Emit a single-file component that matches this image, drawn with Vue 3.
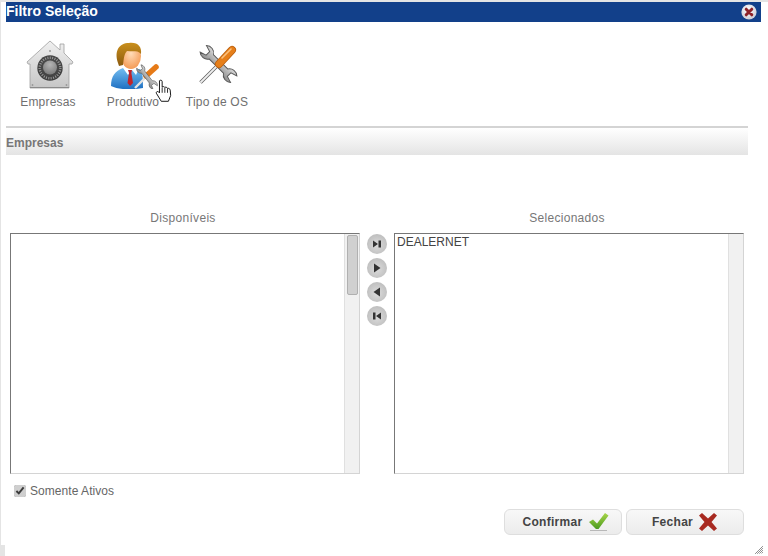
<template>
  <div class="page">
    <div class="corner"></div>
    <div class="titlebar">
      <span class="title">Filtro Seleção</span>
      <svg class="close" width="16" height="16" viewBox="0 0 16 16">
        <defs>
          <radialGradient id="cg" cx="0.45" cy="0.35" r="0.7"><stop offset="0" stop-color="#ffffff"/><stop offset="1" stop-color="#c9c9d2"/></radialGradient>
        </defs>
        <circle cx="8" cy="8" r="7.6" fill="url(#cg)"/>
        <path d="M5.2 5.2 L10.8 10.8 M10.8 5.2 L5.2 10.8" stroke="#8e2228" stroke-width="3" stroke-linecap="round"/>
      </svg>
    </div>

    <div class="toolbar">
      <div class="tool t1">
        <svg width="56" height="50" viewBox="0 0 56 50">
          <defs>
            <linearGradient id="house" x1="0" y1="0" x2="0" y2="1"><stop offset="0" stop-color="#f0f0f0"/><stop offset="1" stop-color="#c6c6c6"/></linearGradient>
            <radialGradient id="dial" cx="0.5" cy="0.4" r="0.6"><stop offset="0" stop-color="#555"/><stop offset="1" stop-color="#3c3c3c"/></radialGradient>
            <radialGradient id="knob" cx="0.5" cy="0.3" r="0.7"><stop offset="0" stop-color="#b5b5b5"/><stop offset="1" stop-color="#7c7c7c"/></radialGradient>
          </defs>
          <path d="M30 2 L40 11 L40 5 L44 5 L44 14 L53 23 L52 25 L49 25 L49 49 L10 49 L10 25 L8 25 L7 23 Z" fill="url(#house)" stroke="#a0a0a0" stroke-width="0.8"/>
          <path d="M10 48 H49 V49 H10 Z" fill="#8a8a8a"/>
          <circle cx="30" cy="29" r="12.7" fill="url(#dial)"/>
          <circle cx="30" cy="29" r="10.3" fill="none" stroke="#9a9a9a" stroke-width="2.4" stroke-dasharray="1 1.4"/>
          <circle cx="30" cy="28.5" r="7" fill="url(#knob)"/>
          <circle cx="30" cy="12" r="1" fill="#9a9a9a"/>
          <circle cx="12.5" cy="46" r="0.9" fill="#999"/>
          <circle cx="46.5" cy="46" r="0.9" fill="#999"/>
        </svg>
        <span class="lbl">Empresas</span>
      </div>
      <div class="tool t2">
        <svg width="56" height="50" viewBox="0 0 56 50">
          <defs>
            <linearGradient id="suit" x1="0" y1="0" x2="0" y2="1"><stop offset="0" stop-color="#74bdf0"/><stop offset="1" stop-color="#1e6fc2"/></linearGradient>
            <radialGradient id="skin" cx="0.5" cy="0.4" r="0.65"><stop offset="0" stop-color="#ffdcb8"/><stop offset="1" stop-color="#f3964e"/></radialGradient>
            <linearGradient id="hair" x1="0" y1="0" x2="0" y2="1"><stop offset="0" stop-color="#c98f1c"/><stop offset="1" stop-color="#8c5b0f"/></linearGradient>
            <linearGradient id="steel" x1="0" y1="0" x2="0" y2="1"><stop offset="0" stop-color="#d4d4d4"/><stop offset="1" stop-color="#8d8d8d"/></linearGradient>
          </defs>
          <path d="M6 47 C6 37 10 32 18 29 L27 30 L35 30 C38 33 38 40 38 49 C28 51 14 51 6 47 Z" fill="url(#suit)"/>
          <path d="M18 29 L23 36 L27 31 L31 36 L34 29 Z" fill="#fff"/>
          <path d="M21 31 L25 31 L24.4 34 L26 44 L23 47 L20.5 44 L22 34 Z" fill="#c1242b" transform="translate(2 0)"/>
          <ellipse cx="26" cy="17" rx="10" ry="13" fill="url(#skin)"/>
          <path d="M13 24 C9 12 14 4 24 4 C33 3 37 8 36 15 C33 11 28 13 22 12 C19 15 19 19 18 26 L14 27 Z" fill="url(#hair)"/>
          <path d="M30 49 L44 35" stroke="#e4e4e4" stroke-width="2.4"/>
          <path d="M41 37 L51 28" stroke="#e67a17" stroke-width="5.5" stroke-linecap="round"/>
          <path d="M-21.5 -4.5 L-15 -2.5 L-15 2.5 L-21.5 4.5 A7.5 7.5 0 0 0 -10 3 L10 3 A7.5 7.5 0 0 0 21.5 4.5 L15 2.5 L15 -2.5 L21.5 -4.5 A7.5 7.5 0 0 0 10 -3 L-10 -3 A7.5 7.5 0 0 0 -21.5 -4.5 Z" transform="translate(42 38) rotate(52) scale(0.62)" fill="url(#steel)" stroke="#5f5f5f" stroke-width="1"/>
        </svg>
        <span class="lbl">Produtivo</span>
        <svg class="cursor" width="17" height="26" viewBox="0 0 19 26">
          <path d="M5 1.5 C6 0.5 8 0.8 8 2.5 L8 8.5 C9 7.8 10.5 8 11 9 C12 8.4 13.4 8.8 13.8 10 C15 9.6 16.8 10.4 17 12 L17.5 18 L15 24.5 L7 24.5 L1.5 15.5 C1 14 2.6 13 4 14 L5 15 Z" fill="#fff" stroke="#000" stroke-width="1"/>
          <path d="M8 9 L8 15 M11 9.5 L11 15 M14 10.5 L14 15" stroke="#000" stroke-width="0.9" fill="none"/>
        </svg>
      </div>
      <div class="tool t3">
        <svg width="56" height="50" viewBox="0 0 56 50">
          <defs>
            <linearGradient id="steel2" x1="0" y1="0" x2="0" y2="1"><stop offset="0" stop-color="#d8d8d8"/><stop offset="1" stop-color="#8f8f8f"/></linearGradient>
          </defs>
          <path d="M-21.5 -4.5 L-15 -2.5 L-15 2.5 L-21.5 4.5 A7.5 7.5 0 0 0 -10 3 L10 3 A7.5 7.5 0 0 0 21.5 4.5 L15 2.5 L15 -2.5 L21.5 -4.5 A7.5 7.5 0 0 0 10 -3 L-10 -3 A7.5 7.5 0 0 0 -21.5 -4.5 Z" transform="translate(29.5 25) rotate(45)" fill="url(#steel2)" stroke="#5a5a5a" stroke-width="1"/>
          <path d="M11.5 43.5 L31 24" stroke="#5c5c5c" stroke-width="3.4"/>
          <path d="M11.5 43.5 L31 24" stroke="#eeeeee" stroke-width="2"/>
          <path d="M30 25 L43 11" stroke="#b85f10" stroke-width="8" stroke-linecap="round"/>
          <path d="M30 25 L43 11" stroke="#e67f1a" stroke-width="6.4" stroke-linecap="round"/>
          <path d="M33 19 L42 10" stroke="#fbc07c" stroke-width="1.6" stroke-linecap="round"/>
        </svg>
        <span class="lbl">Tipo de OS</span>
      </div>
    </div>

    <div class="section">Empresas</div>

    <div class="picker">
      <div class="col">
        <div class="cap">Disponíveis</div>
        <div class="list">
          <div class="items"></div>
          <div class="scroll"><div class="thumb"></div></div>
        </div>
      </div>
      <div class="arrows">
        <button v-for="a in arrows" :key="a" class="arrow" type="button">
          <svg width="12" height="12" viewBox="0 0 12 12"><path :d="a" fill="#333"/></svg>
        </button>
      </div>
      <div class="col">
        <div class="cap">Selecionados</div>
        <div class="list">
          <div class="items"><div class="item">DEALERNET</div></div>
          <div class="scroll"></div>
        </div>
      </div>
    </div>

    <label class="check"><input type="checkbox" checked /> <span>Somente Ativos</span></label>

    <div class="actions">
      <button class="btn b1" type="button">
        <span class="btxt">Confirmar</span>
        <svg width="21" height="20" viewBox="0 0 21 20">
          <defs><linearGradient id="gr" x1="0" y1="0" x2="0" y2="1"><stop offset="0" stop-color="#a9d64a"/><stop offset="1" stop-color="#4b9a1e"/></linearGradient></defs>
          <path d="M1 10 L5 7.5 L9 11.5 L17 1 L20.5 3.5 L10.5 17 L8 17 Z" fill="url(#gr)"/>
          <path d="M2 18.5 H19" stroke="#aaa" stroke-width="0.8"/>
        </svg>
      </button>
      <button class="btn" type="button">
        <span class="btxt">Fechar</span>
        <svg width="20" height="20" viewBox="0 0 20 20">
          <path d="M1 3.5 L4 1 L10 6.5 L16 1 L19 3.5 L13.5 10 L19 16.5 L16 19 L10 13.5 L4 19 L1 16.5 L6.5 10 Z" fill="#a82a21"/>
        </svg>
      </button>
    </div>
    <svg class="grip" width="8" height="8" viewBox="0 0 8 8">
      <path d="M7.5 .5 L.5 7.5 M7.5 2.5 L2.5 7.5 M7.5 4.5 L4.5 7.5 M7.5 6.5 L6.5 7.5" stroke="#333" stroke-width="1" stroke-dasharray="1 .5"/>
    </svg>
  </div>
</template>

<script setup>
const arrows = [
  'M2 2.5 L7 6 L2 9.5 Z M7.5 2.5 H10 V9.5 H7.5 Z',
  'M3 1.5 L9.5 6 L3 10.5 Z',
  'M9 1.5 L2.5 6 L9 10.5 Z',
  'M10 2.5 L5 6 L10 9.5 Z M2 2.5 H4.5 V9.5 H2 Z'
]
</script>

<style>
html, body { margin: 0; background: #fff; }
</style>

<style scoped>
.page {
  position: relative;
  width: 768px;
  height: 556px;
  box-sizing: border-box;
  border-top: 2px solid #e4e4e4;
  border-left: 1px solid #e4e4e4;
  padding-left: 5px;
  background: #fff;
  font-family: "Liberation Sans", Arial, sans-serif;
  font-size: 12px;
  color: #666;
  overflow: hidden;
}
.corner { position: absolute; left: -1px; bottom: 0; width: 5px; height: 11px; background: #e4e4e4; }
.titlebar {
  width: 755px;
  height: 20px;
  box-sizing: border-box;
  background: #12408a;
  display: flex;
  align-items: center;
  justify-content: space-between;
  padding: 0 4px 0 0;
}
.title { color: #fff; font-weight: bold; font-size: 14px; position: relative; top: -1px; }
.close { display: block; }
.toolbar {
  width: 742px;
  height: 106px;
  box-sizing: border-box;
  display: flex;
  padding: 17px 0 0 0;
  border-bottom: 2px solid #d4d4d4;
}
.tool { position: relative; display: flex; flex-direction: column; align-items: center; flex: none; }
.t1 { width: 84px; }
.t2 { width: 86px; }
.t3 { width: 82px; }
.lbl { margin-top: 6px; font-size: 12px; letter-spacing: 0.2px; color: #707070; white-space: nowrap; }
.cursor { position: absolute; left: 65px; top: 39px; }
.section {
  width: 742px;
  height: 27px;
  box-sizing: border-box;
  padding-top: 8px;
  background: linear-gradient(#ffffff, #e4e4e4);
  font-weight: bold;
  font-size: 12px;
  color: #777;
}
.picker {
  display: flex;
  width: 734px;
  margin: 56px 0 0 4px;
}
.col { width: 350px; flex: none; }
.cap { height: 22px; padding-right: 4px; text-align: center; color: #777; font-size: 12px; letter-spacing: 0.3px; }
.list {
  display: flex;
  height: 241px;
  box-sizing: border-box;
  border: 1px solid #d4d4d4;
  border-top-color: #777;
  border-left-color: #777;
}
.items { flex: 1; padding: 1px 2px; color: #444; font-size: 12px; }
.item { line-height: 14px; }
.scroll { width: 15px; background: #f1f1f1; border-left: 1px solid #e0e0e0; padding-top: 1px; box-sizing: border-box; }
.thumb { width: 11px; height: 60px; margin-left: 2px; background: #d0d0d0; border: 1px solid #b0b0b0; border-radius: 2px; box-sizing: border-box; }
.arrows { width: 34px; flex: none; display: flex; flex-direction: column; align-items: center; gap: 4px; padding-top: 23px; }
.arrow {
  width: 20px; height: 20px; padding: 0; border: 0; border-radius: 50%;
  background: radial-gradient(circle at 50% 55%, #dcdcdc, #b4b4b4);
  display: flex; align-items: center; justify-content: center;
}
.check { display: flex; align-items: center; gap: 4px; margin: 9px 0 0 8px; font-size: 12px; letter-spacing: 0.05px; color: #666; height: 16px; }
.check input { margin: 0; width: 12px; height: 12px; accent-color: #cfcfcf; }
.actions { display: flex; justify-content: flex-end; gap: 4px; width: 738px; margin-top: 10px; }
.btn {
  width: 118px; height: 26px; box-sizing: border-box; padding: 0;
  border: 1px solid #dedede; border-radius: 6px;
  background: linear-gradient(#f8f8f8, #ececec);
  display: flex; align-items: center; justify-content: center; gap: 5px;
  font-family: "Liberation Sans", Arial, sans-serif;
  font-weight: bold; font-size: 12px; color: #444;
}
.b1 { padding-left: 5px; }
.btxt { letter-spacing: 0.3px; }
.grip { position: absolute; right: 5px; bottom: 2px; }
</style>
